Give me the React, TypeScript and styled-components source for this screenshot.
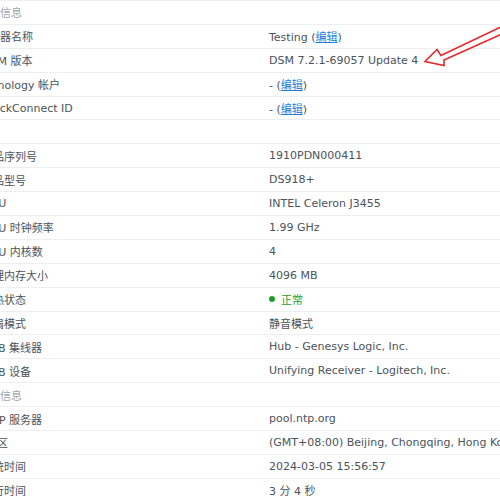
import React from "react";
import styled, { createGlobalStyle } from "styled-components";

const Global = createGlobalStyle`
  html, body { margin: 0; padding: 0; background: #ffffff; overflow: hidden; }
  body { font-family: "DejaVu Sans", "Noto Sans CJK SC", sans-serif; }
`;

const Page = styled.div`
  position: relative;
  width: 500px;
  height: 500px;
  overflow: hidden;
  background: #fff;
`;

const Table = styled.div`
  margin-left: -22px;
  width: 640px;
  border-top: 1px solid #eceef0;
`;

const Row = styled.div<{ $header?: boolean }>`
  display: grid;
  grid-template-columns: 291px 1fr;
  align-items: center;
  height: 23.9px;
  box-sizing: border-box;
  border-bottom: 1px solid #eceef0;
  font-size: 11px;
  color: ${(p) => (p.$header ? "#a0a5aa" : "#4b535b")};
  white-space: nowrap;
`;

const Label = styled.span<{ $shift?: number }>`
  padding-left: ${(p) => p.$shift ?? 0}px;
`;

const Value = styled.span`
  color: #4b535b;
`;

const Edit = styled.a`
  color: #1a7fd9;
  text-decoration: underline;
  cursor: pointer;
`;

const Status = styled.span`
  color: #23a323;
  display: inline-flex;
  align-items: center;
  gap: 6px;
`;

const Dot = styled.span`
  width: 6px;
  height: 6px;
  border-radius: 50%;
  background: #1f9c2b;
`;

const Arrow = styled.svg`
  position: absolute;
  left: 0;
  top: 0;
  pointer-events: none;
`;

type Item = { label: string; value?: React.ReactNode; header?: boolean; shift?: number };

const editLink = (prefix: string) => (
  <>
    {prefix} (<Edit>编辑</Edit>)
  </>
);

const items: Item[] = [
  { label: "基本信息", header: true, shift: -3 },
  { label: "服务器名称", value: editLink("Testing") },
  { label: "DSM 版本", value: "DSM 7.2.1-69057 Update 4", shift: 4 },
  { label: "Synology 帐户", value: editLink("-"), shift: 6 },
  { label: "QuickConnect ID", value: editLink("-"), shift: 3 },
  { label: "硬件", header: true, shift: 0 },
  { label: "产品序列号", value: "1910PDN000411", shift: 4 },
  { label: "产品型号", value: "DS918+", shift: 4 },
  { label: "CPU", value: "INTEL Celeron J3455", shift: 6 },
  { label: "CPU 时钟频率", value: "1.99 GHz", shift: 6 },
  { label: "CPU 内核数", value: "4", shift: 6 },
  { label: "物理内存大小", value: "4096 MB", shift: 4 },
  { label: "散热状态", value: (
      <Status>
        <Dot />
        正常
      </Status>
    ), shift: 4 },
  { label: "风扇模式", value: "静音模式", shift: 4 },
  { label: "USB 集线器", value: "Hub - Genesys Logic, Inc.", shift: 5 },
  { label: "USB 设备", value: "Unifying Receiver - Logitech, Inc.", shift: 5 },
  { label: "时间信息", header: true, shift: -3 },
  { label: "NTP 服务器", value: "pool.ntp.org", shift: 6 },
  { label: "时区", value: "(GMT+08:00) Beijing, Chongqing, Hong Kong, Urumqi", shift: 8 },
  { label: "系统时间", value: "2024-03-05 15:56:57", shift: 4 },
  { label: "运行时间", value: "3 分 4 秒", shift: 4 },
];

export default function App() {
  return (
    <Page>
      <Global />
      <Table>
        {items.map((it, i) => (
          <Row key={i} $header={it.header}>
            <Label $shift={it.shift}>{it.label}</Label>
            <Value>{it.value}</Value>
          </Row>
        ))}
      </Table>
      <Arrow width="500" height="500" viewBox="0 0 500 500">
        <polygon
          points="425,61.5 437,49.5 441,55.5 503,26 503,33.5 444,60 444,65.5"
          fill="#ffffff"
          stroke="#e8262a"
          strokeWidth="1.6"
          strokeLinejoin="miter"
        />
      </Arrow>
    </Page>
  );
}
